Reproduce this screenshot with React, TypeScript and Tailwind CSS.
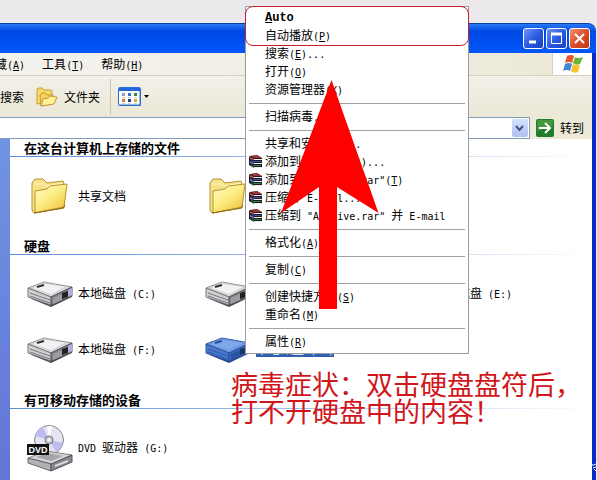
import type { ReactNode } from "react"

type MenuEntry = { label: string; bold?: boolean; rar?: boolean } | "separator"

// "&" marks the letter that is underlined as the shortcut
const menuEntries: MenuEntry[] = [
  { label: "&Auto", bold: true },
  { label: "自动播放(&P)" },
  { label: "搜索(&E)..." },
  { label: "打开(&O)" },
  { label: "资源管理器(&X)" },
  "separator",
  { label: "扫描病毒..." },
  "separator",
  { label: "共享和安全(&H)..." },
  { label: "添加到压缩文件(&A)...", rar: true },
  { label: '添加到 "Archive.rar"(&T)', rar: true },
  { label: "压缩并 E-mail...", rar: true },
  { label: '压缩到 "Archive.rar" 并 E-mail', rar: true },
  "separator",
  { label: "格式化(&A)" },
  "separator",
  { label: "复制(&C)" },
  "separator",
  { label: "创建快捷方式(&S)" },
  { label: "重命名(&M)" },
  "separator",
  { label: "属性(&R)" },
]

/* Chinese at 12px, latin runs half as wide */
function Label({ text }: { text: string }) {
  return (
    <span className="whitespace-pre">
      {text.split(/([\x20-\x7e]+)/).map((run, i) => {
        if (!/^[\x20-\x7e]/.test(run)) return run
        const at = run.indexOf("&")
        return (
          <span key={i} className="font-['DejaVu_Sans_Mono',monospace] text-[10px]">
            {at < 0 ? (
              run
            ) : (
              <>
                {run.slice(0, at)}
                <u>{run[at + 1]}</u>
                {run.slice(at + 2)}
              </>
            )}
          </span>
        )
      })}
    </span>
  )
}

/* ICONS */
function FolderIcon() {
  return (
    <svg width="38" height="40" viewBox="0 0 38 40" aria-hidden="true">
      <defs>
        <linearGradient id="folderFront" x1="0" y1="0" x2="0.8" y2="1">
          <stop offset="0" stopColor="#fffbc9" />
          <stop offset="0.5" stopColor="#fdee86" />
          <stop offset="1" stopColor="#eec23b" />
        </linearGradient>
      </defs>
      <path d="M1 7 4 3h8l4 4 16-2 1 3v24L3 37Q1 36 1 33z" fill="#f6e28a" stroke="#b8922d" />
      <path d="M4 8h8l4 2 16-3" stroke="#fff6bd" fill="none" />
      <path d="M4 15 16 13l3-3 17-2-3 23-29 6z" fill="url(#folderFront)" stroke="#b8922d" />
      <path d="M3 37 32 32l2-3" fill="none" stroke="#8b6a18" />
    </svg>
  )
}

function DriveIcon({ selected = false }: { selected?: boolean }) {
  return (
    <svg width="48" height="28" viewBox="0 0 48 28" aria-hidden="true">
      <path d="M3 18l22 9 21-10v-3L25 23z" fill={selected ? "#24468f" : "#4c4c52"} />
      <path d="M2 8 18 2l28 5-21 10z" fill={selected ? "#6f9ae0" : "#d6d6d8"} stroke={selected ? "#3461b4" : "#98989c"} />
      <path d="M7 8 19 4l20 3-14 7z" fill={selected ? "#7fa8e8" : "#f2f2f3"} />
      <path d="M2 8v9l23 8v-8z" fill={selected ? "#4a79cc" : "#cfcfd2"} stroke={selected ? "#2b529f" : "#77777c"} />
      <path d="M4 13l20 7M4 16l20 7" stroke={selected ? "#2e57a5" : "#78787c"} />
      <path d="M25 17 46 7v9l-21 9z" fill={selected ? "#3968ba" : "#838389"} stroke={selected ? "#2b529f" : "#55555a"} />
      <path d="M27 18l9-4v6l-9 4z" fill={selected ? "#2b559f" : "#9d9da3"} />
      <path d="M36 13l6-2v6l-6 2z" fill={selected ? "#17366f" : "#222228"} />
      <path d="M42 10l4-2v7l-4 2z" fill={selected ? "#5d8ad5" : "#b4b1dd"} />
      <path d="M11 7l7-2" stroke={selected ? "#2b529f" : "#333"} strokeWidth="2" />
    </svg>
  )
}

function DvdIcon() {
  return (
    <svg width="48" height="48" viewBox="0 0 48 48" aria-hidden="true">
      <circle cx="23" cy="16" r="14.5" fill="#e4e4f2" stroke="#86868e" />
      <path d="M23 16 9 12a15 15 0 0 1 8-9zM23 16l14 3a14 14 0 0 1-7 9z" fill="#bdbdf2" />
      <path d="M23 16 21 2h5zM23 16l-9 10 5 3z" fill="#fff" />
      <circle cx="23" cy="16" r="4" fill="#c5c5cc" stroke="#74747c" />
      <circle cx="23" cy="16" r="1.5" fill="#fff" />
      <path d="M2 34 20 27l26 4-20 9z" fill="#d3d3d5" stroke="#838387" />
      <path d="M10 33l11-4 16 3-12 5z" fill="#a5a5a9" />
      <path d="M2 34v5l23 8v-7z" fill="#b2b2b6" stroke="#66666b" />
      <path d="M25 40l21-9v7l-21 9z" fill="#88888e" stroke="#505055" />
      <path d="M29 41l13-5v2l-13 5z" fill="#dedee2" />
      <path d="M1 20h22v11H1z" fill="#101214" />
      <text x="12" y="29" textAnchor="middle" className="fill-white font-['Liberation_Sans',sans-serif] text-[9px] font-bold">
        DVD
      </text>
    </svg>
  )
}

function SmallFoldersIcon() {
  return (
    <svg width="22" height="20" viewBox="0 0 22 20" aria-hidden="true">
      <path d="M1 2 3 1h3l2 2h7l1 2v10L1 17z" fill="#f7dc6a" stroke="#c39b35" />
      <path d="M4 8l2-2h3l2 2h6v9L5 19z" fill="#f3d35b" stroke="#c39b35" />
      <path d="M7 12l5-1 2-2 7 1-3 7-13 2z" fill="#fff19a" stroke="#c39b35" />
    </svg>
  )
}

function ViewsIcon() {
  return (
    <svg width="24" height="20" viewBox="0 0 24 20" aria-hidden="true">
      <rect x="0.5" y="0.5" width="22" height="18" rx="1" fill="#fff" stroke="#2a6fd4" />
      <path d="M1 1h21v3H1z" fill="#2268d8" />
      <path d="M1 18h22M22 4v15" stroke="#2f6fc4" />
      <path d="M4 6h3v3H4z" fill="#8f9fd6" />
      <path d="M10 6h3v3h-3z" fill="#3273c9" />
      <path d="M16 6h3v3h-3z" fill="#2f8b35" />
      <path d="M4 12h3v3H4z" fill="#e07643" />
      <path d="M10 12h3v3h-3z" fill="#243f93" />
      <path d="M16 12h3v3h-3z" fill="#d3a92e" />
      <path d="M4 10.500h3M10 10.500h3M16 10.500h3M4 16.500h3M10 16.500h3M16 16.500h3" stroke="#c9d1db" />
    </svg>
  )
}

function WindowsLogo() {
  return (
    <svg width="20" height="18" viewBox="0 0 20 18" aria-hidden="true">
      <path d="M4 1q4-2 7 0L9 8Q6 6 2 8z" fill="#e8572b" />
      <path d="M12 2q3 2 8 0l-3 7q-4 2-7-1z" fill="#69b43c" />
      <path d="M2 9q4-2 7 0l-2 7q-3-2-7 0z" fill="#4386dc" />
      <path d="M10 9q3 2 7 1l-2 7q-4 2-7-1z" fill="#f6c32c" />
    </svg>
  )
}

function RarIcon() {
  return (
    <svg width="14" height="14" viewBox="0 0 14 14" aria-hidden="true">
      <path d="M1 1 8 0l5 3v10H5L0 10V2z" fill="#241a1c" />
      <path d="M2 1l6-1 4 3H5z" fill="#a8323c" />
      <path d="M5 4h8v1H5zM5 8h8v1H5zM5 12h8v1H5z" fill="#efe9ea" />
      <path d="M1 2l4 2v1L1 4z" fill="#d65a64" />
      <path d="M1 5l4 2h7V6H5z" fill="#3c50b8" />
      <path d="M1 6l4 2v1L1 8z" fill="#6e7ee0" />
      <path d="M1 9l4 2h7v-1H5z" fill="#1f8458" />
      <path d="M1 10l4 2v1z" fill="#46b98a" />
    </svg>
  )
}

/* WINDOW PARTS */
function CaptionButton({ name, close, children }: { name: string; close?: boolean; children: ReactNode }) {
  return (
    <button
      aria-label={name}
      className={`flex size-[21px] items-center justify-center rounded-[3px] border border-white bg-linear-to-br ${
        close ? "from-[#ee8f70] via-[#dc4f2d] to-[#bf3411]" : "from-[#6f93f3] via-[#2b5be3] to-[#1741c0]"
      }`}
    >
      <svg width="15" height="15" viewBox="0 0 15 15" fill="none" stroke="#fff" aria-hidden="true">
        {children}
      </svg>
    </button>
  )
}

function GroupHeader({ children }: { children: ReactNode }) {
  return (
    <div>
      <h2 className="pl-3.5 text-[13px] leading-[17px] font-bold">{children}</h2>
      <div className="h-px bg-linear-to-r from-[#5a8fd8] via-[#9fc0ea] to-white" />
    </div>
  )
}

function Place({ icon, label, selected }: { icon: ReactNode; label: string; selected?: boolean }) {
  return (
    <button className="flex h-14 items-center gap-1 text-left leading-3">
      <span className="flex w-12 justify-center">{icon}</span>
      <span className={selected ? "bg-[#2f5fae] text-white" : ""}>
        <Label text={label} />
      </span>
    </button>
  )
}

function ContextMenu() {
  return (
    <div role="menu" className="absolute top-1.5 left-[245px] w-56 border border-[#9d9da1] bg-white px-[3px] py-0.5">
      {menuEntries.map((entry, i) =>
        entry === "separator" ? (
          <div key={i} role="separator" className="flex h-[9px] items-center">
            <div className="h-px w-full bg-[#a3a19a]" />
          </div>
        ) : (
          <button key={i} role="menuitem" className="flex h-[18px] w-full items-center gap-0.5 leading-[18px]">
            <span className="w-3.5 shrink-0">{entry.rar && <RarIcon />}</span>
            {entry.bold ? (
              <b className="font-['Liberation_Mono',monospace] text-xs">
                <u>A</u>uto
              </b>
            ) : (
              <Label text={entry.label} />
            )}
          </button>
        )
      )}
      {/* outline round the first two entries */}
      <div className="pointer-events-none absolute -inset-x-px -top-px h-10 rounded-lg border border-[#c81e2c]" />
    </div>
  )
}

export default function App() {
  return (
    <main className="relative flex min-h-screen flex-col overflow-hidden bg-[#ece9ed] pt-[23px] pr-px font-['Noto_Sans_CJK_SC',sans-serif] text-xs text-black">
      {/* TITLE BAR */}
      <header className="flex h-[30px] items-center justify-end gap-0.5 rounded-tr-lg border-t border-[#0a3fa8] bg-linear-to-b from-[#2a7af5] via-[#0048e4] via-25% to-[#0058fa] pr-1.5">
        <CaptionButton name="最小化">
          <path d="M3 11h7" strokeWidth="3" />
        </CaptionButton>
        <CaptionButton name="最大化">
          <path d="M2.500 2v10.500h10V2" />
          <path d="M2 3h11" strokeWidth="3" />
        </CaptionButton>
        <CaptionButton name="关闭" close>
          <path d="M3 3l9 9M12 3l-9 9" strokeWidth="2" />
        </CaptionButton>
      </header>

      <div className="flex flex-1 flex-col border-r-4 border-[#0a2cc4] bg-white">
        {/* MENU BAR */}
        <div className="flex h-[23px] items-stretch justify-between border-b border-[#d8d2bd] bg-linear-to-r from-[#f4f2ee] to-[#ece9d8]">
          <nav className="-ml-[17px] flex items-center gap-[17px]">
            <button><Label text="收藏(&A)" /></button>
            <button><Label text="工具(&T)" /></button>
            <button><Label text="帮助(&H)" /></button>
          </nav>
          <div className="flex w-10 items-center justify-center border-l border-[#d8d2bd] bg-white">
            <WindowsLogo />
          </div>
        </div>

        {/* TOOLBAR */}
        <div className="flex h-[41px] items-center bg-linear-to-b from-[#f2f0e8] to-[#ebe8d7]">
          <button>搜索</button>
          <button className="ml-3 flex items-center gap-1.5">
            <SmallFoldersIcon />
            文件夹
          </button>
          <div className="ml-2.5 h-9 w-px bg-[#c9c5b2]" />
          <button aria-label="查看" className="ml-[7px] flex items-center gap-0.5">
            <ViewsIcon />
            <svg width="5" height="3" viewBox="0 0 5 3" aria-hidden="true">
              <path d="M0 0h5L2.500 3z" />
            </svg>
          </button>
        </div>

        {/* ADDRESS BAR */}
        <div className="flex h-[22px] bg-[#ece9d8]">
          <div className="flex flex-1 items-center border border-l-0 border-[#7f9db9] bg-white pr-px">
            <input aria-label="地址" className="h-full min-w-0 flex-1 px-1 outline-none" />
            <button aria-label="展开" className="flex h-[18px] w-4 items-center justify-center rounded-xs bg-linear-to-b from-[#d3e0fd] to-[#aebff2]">
              <svg width="9" height="7" viewBox="0 0 9 7" fill="none" aria-hidden="true">
                <path d="M1 1l3.500 4L8 1" stroke="#3e5583" strokeWidth="2" />
              </svg>
            </button>
          </div>
          <button className="flex items-center gap-1.5 pr-2 pl-1.5">
            <svg width="18" height="18" viewBox="0 0 18 18" aria-hidden="true">
              <rect width="18" height="18" rx="2" fill="#1f7d29" />
              <path d="M1 1h16v6L1 12z" fill="#43983f" />
              <path d="M3 9h11M9 4l5 5-5 5" fill="none" stroke="#fff" strokeWidth="2" />
            </svg>
            转到
          </button>
        </div>

        {/* FILES */}
        <div className="flex flex-1">
          <aside className="w-2.5 shrink-0 bg-linear-to-b from-[#7093e4] to-[#6375d6]" />
          <section className="flex-1">
            <GroupHeader>在这台计算机上存储的文件</GroupHeader>
            <div className="grid grid-cols-[178px_178px_1fr] pt-[11px] pb-[13px] pl-4">
              <Place icon={<FolderIcon />} label="共享文档" />
              <Place icon={<FolderIcon />} label="" />
            </div>

            <GroupHeader>硬盘</GroupHeader>
            <div className="grid grid-cols-[178px_178px_1fr] pt-[11px] pb-[13px] pl-4">
              <Place icon={<DriveIcon />} label="本地磁盘 (C:)" />
              <Place icon={<DriveIcon />} label="本地磁盘 (D:)" />
              <Place icon={<DriveIcon />} label="本地磁盘 (E:)" />
              <Place icon={<DriveIcon />} label="本地磁盘 (F:)" />
              <Place icon={<DriveIcon selected />} label="本地磁盘 (H:)" selected />
            </div>

            <GroupHeader>有可移动存储的设备</GroupHeader>
            <div className="pt-[11px] pl-4">
              <Place icon={<DvdIcon />} label="DVD 驱动器 (G:)" />
            </div>
          </section>
        </div>
      </div>

      <ContextMenu />

      {/* ANNOTATIONS */}
      <svg className="pointer-events-none absolute top-20 left-[281px]" width="98" height="229" viewBox="0 0 98 229" aria-hidden="true">
        <path d="M50.500 0 97.500 133 56 107v122H38V107L0 133z" fill="#fe0000" />
      </svg>
      <p className="absolute top-[370px] left-[231px] text-[27px] leading-[27px] whitespace-nowrap text-[#d0161a]">
        病毒症状：双击硬盘盘符后，
        <br />
        打不开硬盘中的内容！
      </p>
      <svg className="absolute right-0 bottom-2" width="5" height="9" viewBox="0 0 5 9" fill="none" stroke="#fff" aria-hidden="true">
        <path d="M0 2h2l2-1M1 5l3-1M2 6l2 2" />
      </svg>
    </main>
  )
}
